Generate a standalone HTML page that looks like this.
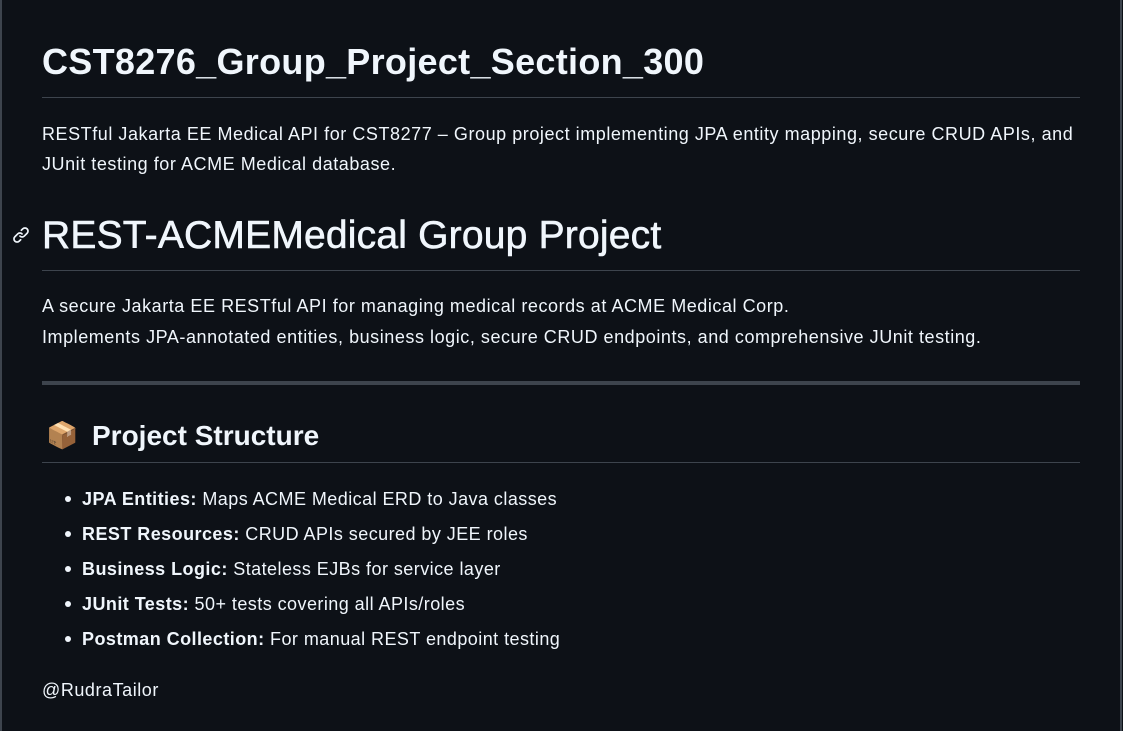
<!DOCTYPE html>
<html><head><meta charset="utf-8"><style>
body{margin:0;background:#0d1117;width:1123px;height:731px;overflow:hidden;font-family:"Liberation Sans",sans-serif;color:#f0f6fc;position:relative}
.b{position:absolute;top:0;bottom:0;width:2px;background:#3d444d}
.t{position:absolute;left:42px;white-space:nowrap;line-height:1}
.hl{position:absolute;left:42px;width:1038px;height:1px;background:#3d444d}
.p{font-size:18px;letter-spacing:0.55px}
li{position:absolute;left:82px;font-size:18px;letter-spacing:0.45px;list-style:none;white-space:nowrap;line-height:1}
li:before{content:"";position:absolute;left:-17px;top:6px;width:6px;height:6px;border-radius:50%;background:#f0f6fc}
</style></head><body>
<div class="b" style="left:0"></div><div class="b" style="left:1120px"></div>
<div class="t" style="top:44px;font-size:36px;font-weight:bold;letter-spacing:0.3px">CST8276_Group_Project_Section_300</div>
<div class="hl" style="top:97px"></div>
<div class="t p" style="top:125px">RESTful Jakarta EE Medical API for CST8277 – Group project implementing JPA entity mapping, secure CRUD APIs, and</div>
<div class="t p" style="top:155px">JUnit testing for ACME Medical database.</div>
<svg style="position:absolute;left:12px;top:226px" width="18" height="18" viewBox="0 0 16 16" fill="#f0f6fc"><path d="m7.775 3.275 1.25-1.25a3.5 3.5 0 1 1 4.95 4.95l-2.5 2.5a3.5 3.5 0 0 1-4.95 0 .751.751 0 0 1 .018-1.042.751.751 0 0 1 1.042-.018 1.998 1.998 0 0 0 2.83 0l2.5-2.5a2.002 2.002 0 0 0-2.83-2.830l-1.25 1.25a.751.751 0 0 1-1.042-.018.751.751 0 0 1-.018-1.042Zm-4.69 9.64a1.998 1.998 0 0 0 2.83 0l1.25-1.25a.751.751 0 0 1 1.042.018.751.751 0 0 1 .018 1.042l-1.25 1.25a3.5 3.5 0 1 1-4.95-4.95l2.5-2.5a3.5 3.5 0 0 1 4.95 0 .751.751 0 0 1-.018 1.042.751.751 0 0 1-1.042.018 1.998 1.998 0 0 0-2.83 0l-2.5 2.5a1.998 1.998 0 0 0 0 2.83Z"/></svg>
<div class="t" style="top:216px;font-size:39px;letter-spacing:0.2px;-webkit-text-stroke:0.6px #f0f6fc">REST-ACMEMedical Group Project</div>
<div class="hl" style="top:270px"></div>
<div class="t p" style="top:297px">A secure Jakarta EE RESTful API for managing medical records at ACME Medical Corp.</div>
<div class="t p" style="top:328px">Implements JPA-annotated entities, business logic, secure CRUD endpoints, and comprehensive JUnit testing.</div>
<div style="position:absolute;left:42px;top:381px;width:1038px;height:4px;background:#3d444d"></div>
<div class="t" style="top:422px;left:46px;font-size:26px">📦</div>
<div class="t" style="top:422px;left:92px;font-size:28px;font-weight:bold">Project Structure</div>
<div class="hl" style="top:462px"></div>
<ul style="margin:0;padding:0">
<li style="top:490px"><b>JPA Entities:</b> Maps ACME Medical ERD to Java classes</li>
<li style="top:525px"><b>REST Resources:</b> CRUD APIs secured by JEE roles</li>
<li style="top:560px"><b>Business Logic:</b> Stateless EJBs for service layer</li>
<li style="top:595px"><b>JUnit Tests:</b> 50+ tests covering all APIs/roles</li>
<li style="top:630px"><b>Postman Collection:</b> For manual REST endpoint testing</li>
</ul>
<div class="t p" style="top:681px">@RudraTailor</div>
</body></html>
